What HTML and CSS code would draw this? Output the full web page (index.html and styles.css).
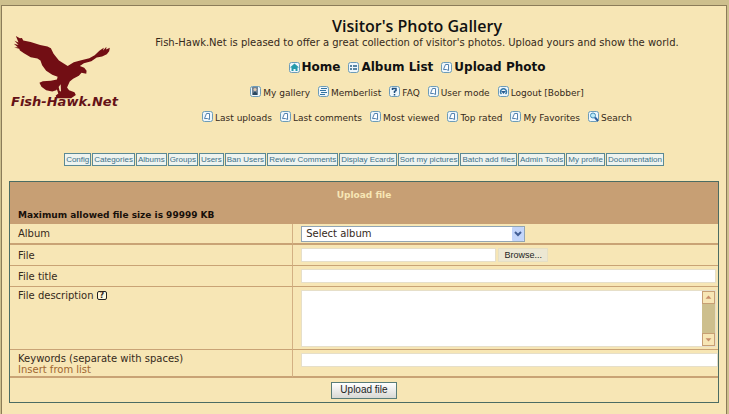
FILE: index.html
```html
<!DOCTYPE html>
<html lang="en">
<head>
    <meta charset="UTF-8">
    <meta name="viewport" content="width=device-width, initial-scale=1.0">
    <title>Visitor's Photo Gallery - Upload file</title>
    <link rel="stylesheet" href="styles.css">
</head>
<body>
    <!-- shared icon shapes -->
    <svg class="sprite" aria-hidden="true">
        <symbol id="box" viewBox="0 0 11 11">
            <rect x="0.5" y="0.5" width="10" height="10" rx="2" fill="#eef6fb" stroke="#6d9cb8"/>
        </symbol>
        <symbol id="page" viewBox="0 0 11 11">
            <use href="#box"/>
            <path d="M4.5 2.5H7.5V8.5L5.5 7.5H2.5Z" fill="#fff" stroke="#5583b0"/>
        </symbol>
        <symbol id="home" viewBox="0 0 11 11">
            <use href="#box"/>
            <path d="M5.5 1.5L10 5.5H8.5V9H6.5V7H4.5V9H2.5V5.5H1Z" fill="#259aab"/>
        </symbol>
        <symbol id="list" viewBox="0 0 11 11">
            <use href="#box"/>
            <path d="M2 4H4M5 4H9M2 7H4M5 7H9" stroke="#286087" stroke-width="1.5"/>
        </symbol>
        <symbol id="lines" viewBox="0 0 11 11">
            <use href="#box"/>
            <path d="M3 2.5H9M2 4.5H8M3 6.5H9M2 8.5H7" stroke="#3475a4"/>
        </symbol>
        <symbol id="person" viewBox="0 0 11 11">
            <use href="#box"/>
            <rect x="2" y="1" width="6" height="8" fill="#708496"/>
            <circle cx="5" cy="3.5" r="1.5" fill="#e5c9ac"/>
            <path d="M3 9V7L5 5.5L7 7V9Z" fill="#29465f"/>
        </symbol>
        <symbol id="help" viewBox="0 0 11 11">
            <use href="#box"/>
            <path d="M3.5 4V2.5H7V4.5L5.5 5.5V7M5.5 8V9.5" fill="none" stroke="#1d4f80" stroke-width="1.5"/>
        </symbol>
        <symbol id="logout" viewBox="0 0 11 11">
            <use href="#box"/>
            <path d="M3.5 8A3 3 0 1 1 7.5 8" fill="none" stroke="#3479aa" stroke-width="1.5"/>
            <path d="M3 5H8L5.5 8Z" fill="#285c91"/>
        </symbol>
        <symbol id="search" viewBox="0 0 11 11">
            <use href="#box"/>
            <circle cx="5" cy="4.5" r="2.5" fill="#bdeaf6" stroke="#438fbc"/>
            <path d="M7 6.5L10 10" stroke="#2c5d9b" stroke-width="2"/>
        </symbol>
    </svg>

    <div class="page">
        <header class="header">
            <a class="logo" href="#">
                <svg class="hawk" viewBox="10 12 290 190" aria-hidden="true">
                    <path d="M18 15L30 22L36 21L40 28L62 33L90 42L112 46L122 51L130 68L146 88L172 104L190 93L212 87L236 81L252 72L266 59L279 50L277 58L287 47L286 55L297 50L295 60L288 69L274 76L258 79L242 90L220 96L208 104L221 109L228 118L227 127L213 124L205 133L188 142L178 150L170 168L176 176L192 182L196 190L182 200L140 200L136 192L144 186L140 174L145 166L148 178L152 180L151 158L138 176L126 180L108 176L94 166L88 154L98 149L122 148L140 144L142 136L126 130L108 118L96 102L91 88L82 82L62 78L42 66L30 58L28 53L13 49L24 48L12 38L26 42L14 29L26 34Z" fill="#720e14"/>
                </svg>
                <span class="logo-text">Fish-Hawk.Net</span>
            </a>
            <div class="intro">
                <h1>Visitor's Photo Gallery</h1>
                <p>Fish-Hawk.Net is pleased to offer a great collection of visitor's photos. Upload yours and show the world.</p>
                <nav class="menu main-menu">
                    <a href="#"><svg><use href="#home"/></svg>Home</a>
                    <a href="#"><svg><use href="#list"/></svg>Album List</a>
                    <a href="#"><svg><use href="#page"/></svg>Upload Photo</a>
                </nav>
                <nav class="menu">
                    <a href="#"><svg><use href="#person"/></svg>My gallery</a>
                    <a href="#"><svg><use href="#lines"/></svg>Memberlist</a>
                    <a href="#"><svg><use href="#help"/></svg>FAQ</a>
                    <a href="#"><svg><use href="#page"/></svg>User mode</a>
                    <a href="#"><svg><use href="#logout"/></svg>Logout [Bobber]</a>
                </nav>
                <nav class="menu">
                    <a href="#"><svg><use href="#page"/></svg>Last uploads</a>
                    <a href="#"><svg><use href="#page"/></svg>Last comments</a>
                    <a href="#"><svg><use href="#page"/></svg>Most viewed</a>
                    <a href="#"><svg><use href="#page"/></svg>Top rated</a>
                    <a href="#"><svg><use href="#page"/></svg>My Favorites</a>
                    <a href="#"><svg><use href="#search"/></svg>Search</a>
                </nav>
            </div>
        </header>

        <nav class="admin-menu">
            <a href="#">Config</a>
            <a href="#">Categories</a>
            <a href="#">Albums</a>
            <a href="#">Groups</a>
            <a href="#">Users</a>
            <a href="#">Ban Users</a>
            <a href="#">Review Comments</a>
            <a href="#">Display Ecards</a>
            <a href="#">Sort my pictures</a>
            <a href="#">Batch add files</a>
            <a href="#">Admin Tools</a>
            <a href="#">My profile</a>
            <a href="#">Documentation</a>
        </nav>

        <form class="upload">
            <table>
                <colgroup>
                    <col class="label-col">
                    <col>
                </colgroup>
                <thead>
                    <tr>
                        <th colspan="2">
                            <h2>Upload file</h2>
                            <div class="max-size">Maximum allowed file size is 99999 KB</div>
                        </th>
                    </tr>
                </thead>
                <tbody>
                    <tr class="row-album">
                        <td class="label"><label for="album">Album</label></td>
                        <td>
                            <select id="album">
                                <option>Select album</option>
                            </select>
                        </td>
                    </tr>
                    <tr>
                        <td class="label"><label for="file">File</label></td>
                        <td>
                            <div class="file-field">
                                <input type="text" id="file">
                                <button type="button" class="browse">Browse...</button>
                            </div>
                        </td>
                    </tr>
                    <tr>
                        <td class="label"><label for="title">File title</label></td>
                        <td><input type="text" id="title"></td>
                    </tr>
                    <tr class="row-description">
                        <td class="label">
                            <label for="description">File description</label>
                            <a class="hint" href="#">?</a>
                        </td>
                        <td>
                            <div class="description-field">
                                <textarea id="description"></textarea>
                                <div class="scrollbar" aria-hidden="true">
                                    <svg viewBox="0 0 13 13"><path d="M3 8L6.5 4L10 8Z"/></svg>
                                    <svg viewBox="0 0 13 13"><path d="M3 5L6.5 9L10 5Z"/></svg>
                                </div>
                            </div>
                        </td>
                    </tr>
                    <tr class="row-keywords">
                        <td class="label">
                            <label for="keywords">Keywords (separate with spaces)</label>
                            <a class="insert" href="#">Insert from list</a>
                        </td>
                        <td><input type="text" id="keywords"></td>
                    </tr>
                </tbody>
                <tfoot>
                    <tr>
                        <td colspan="2"><button type="submit" class="submit">Upload file</button></td>
                    </tr>
                </tfoot>
            </table>
        </form>
    </div>
</body>
</html>
```

FILE: styles.css
```css
* {
    margin: 0;
    padding: 0;
    box-sizing: border-box;
}

body {
    font-family: Verdana, "DejaVu Sans", sans-serif;
    font-size: 10px;
    line-height: 13px;
    color: #35291a;
    background: #cdbf8d;
    min-height: 100vh;
    display: flex;
    flex-direction: column;
    padding: 5px 2px 0 1px;
}

a {
    color: inherit;
    text-decoration: none;
}

.sprite {
    display: none;
}

.page {
    flex: 1;
    background: #f7e6b5;
    border: 1px solid #8b7c59;
    border-bottom: none;
    padding: 10px 7px;
}

.header {
    display: flex;
}

.logo {
    width: 106px;
    padding: 19px 0 0 2px;
    color: #651217;
    flex-shrink: 0;
    white-space: nowrap;
}

.hawk {
    display: block;
    width: 98px;
    height: 64px;
    margin-left: 2px;
}

.logo-text {
    display: block;
    margin-top: -4px;
    font-size: 13px;
    line-height: 14px;
    font-weight: bold;
    font-style: italic;
}

.intro {
    flex: 1;
    text-align: center;
    white-space: nowrap;
}

h1 {
    font-family: "Trebuchet MS", "Open Sans", sans-serif;
    font-size: 16px;
    font-weight: 600;
    line-height: 20px;
    color: #111;
}

.intro p {
    margin-bottom: 11px;
}

.menu {
    display: flex;
    justify-content: center;
    gap: 8px;
    font-size: 9px;
    line-height: 15px;
    margin-bottom: 10px;
}

.menu a {
    display: flex;
    gap: 2px;
}

.menu svg {
    width: 11px;
    height: 11px;
}

.main-menu {
    gap: 8px;
    margin-bottom: 11px;
    font-size: 12px;
    font-weight: bold;
    color: #111;
}

.main-menu svg {
    margin-top: 2px;
}

.admin-menu {
    display: flex;
    justify-content: center;
    gap: 1px;
    margin: 17px 0 15px;
    font-family: Arial, "Liberation Sans", sans-serif;
    font-size: 8px;
    line-height: 11px;
    white-space: nowrap;
}

.admin-menu a {
    color: #3c7189;
    background: #eef3ef;
    border: 1px solid #5b8994;
    padding: 0 1px;
}

table {
    width: 100%;
    table-layout: fixed;
    border-collapse: separate;
    border-spacing: 0;
    border: 1px solid #4b6c63;
}

.label-col {
    width: 40%;
}

th {
    background: #c79f74;
    text-align: left;
    padding: 7px 8px 2px;
    color: #18100a;
    font-size: 9px;
}

h2 {
    font-size: 9px;
    line-height: 13px;
    color: #f7e6b5;
    text-align: center;
    margin-bottom: 7px;
}

td {
    height: 21px;
    padding: 0 2px 0 8px;
    border-bottom: 1px solid #c9a375;
    vertical-align: middle;
}

.label {
    border-right: 1px solid #d3b083;
}

.row-album td,
.row-keywords td {
    border-bottom-width: 2px;
}

input,
select,
textarea {
    display: block;
    width: 100%;
    height: 14px;
    background: #fff;
    border: 1px solid #e6dfc9;
    border-radius: 0;
    font: inherit;
}

select {
    appearance: none;
    width: 54%;
    height: 16px;
    padding: 0 4px;
    border-color: #91a5b4;
    color: #35291a;
    background: #fff url("data:image/svg+xml,%3Csvg xmlns='http://www.w3.org/2000/svg' width='12' height='14'%3E%3Crect width='12' height='14' rx='1' fill='%23c3d5fa'/%3E%3Cpath d='M3 5l3 3 3-3' fill='none' stroke='%23435f96' stroke-width='2'/%3E%3C/svg%3E") no-repeat right center;
}

.file-field {
    display: flex;
    gap: 2px;
}

.file-field input {
    width: 47%;
}

button {
    font-family: Arial, "Liberation Sans", sans-serif;
    color: #222;
}

.browse {
    width: 50px;
    height: 14px;
    font-size: 9px;
    line-height: 12px;
    background: #ece7d3;
    border: 1px solid #e5dfc5;
}

.row-description td {
    height: 63px;
}

.row-description .label {
    vertical-align: top;
    padding-top: 2px;
}

.hint {
    display: inline-block;
    width: 10px;
    height: 9px;
    border: 1px solid #222;
    border-radius: 2px;
    background: #fff8dc;
    font-size: 8px;
    font-weight: bold;
    line-height: 7px;
    text-align: center;
    vertical-align: 1px;
}

.description-field {
    display: flex;
    height: 57px;
    border: 1px solid #e6dfc9;
}

textarea {
    flex: 1;
    height: 100%;
    border: none;
    resize: none;
}

.scrollbar {
    display: flex;
    flex-direction: column;
    justify-content: space-between;
    background: #cdbf8d;
}

.scrollbar svg {
    width: 13px;
    height: 13px;
    background: #f7e6b5;
    border: 1px solid #c79f74;
    fill: #c88e6b;
}

.row-keywords td {
    height: 28px;
    line-height: 11px;
    padding-right: 0;
    vertical-align: top;
    padding-top: 3px;
}

.insert {
    display: block;
    color: #a0662f;
}

tfoot td {
    height: 24px;
    padding: 0;
    border-bottom: none;
}

.submit {
    display: block;
    margin: 0 auto;
    width: 66px;
    height: 17px;
    font-size: 10px;
    line-height: 14px;
    background: linear-gradient(#fff, #d8d8d4);
    border: 1px solid #587c77;
}
```
